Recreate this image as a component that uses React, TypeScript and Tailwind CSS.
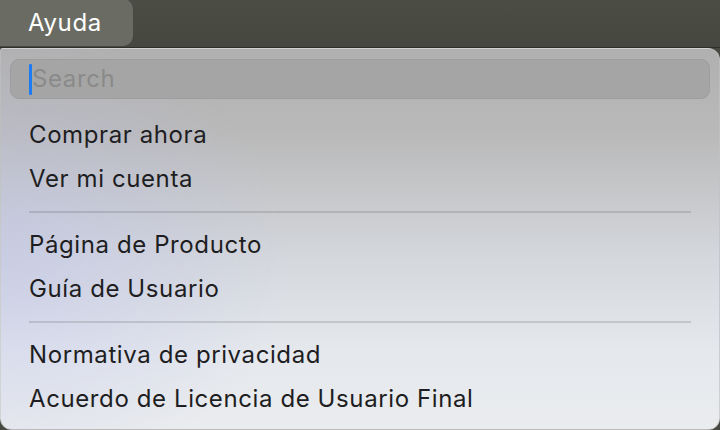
const groups = [
  ['Comprar ahora', 'Ver mi cuenta'],
  ['Página de Producto', 'Guía de Usuario'],
  ['Normativa de privacidad', 'Acuerdo de Licencia de Usuario Final'],
]

export default function App() {
  return (
    <div
      className="w-[720px] h-[430px] overflow-hidden bg-[#474941] flex flex-col tracking-[0.6px]"
      style={{ fontFamily: 'Inter, "Liberation Sans", sans-serif' }}
    >
      {/* Menu bar */}
      <div className="h-[48px] shrink-0 flex bg-[linear-gradient(to_bottom,#4b4d45,#464840)] border-b border-[#2e2f2b]">
        <div className="h-[47px] w-[133px] -mt-[1px] rounded-br-[10px] rounded-tr-[10px] bg-[#6a6c64] flex items-center pl-[28px]">
          <span className="text-white text-[24px] leading-none">Ayuda</span>
        </div>
      </div>

      {/* Dropdown panel */}
      <div className="flex-1 flex flex-col rounded-tr-[12px] rounded-b-[12px] rounded-tl-[3px] border border-[#c2c2c2]/60 bg-[radial-gradient(ellipse_40%_60%_at_0%_55%,rgba(190,195,235,0.5),transparent),linear-gradient(to_bottom,#b0b0b0_0%,#b9b9b9_22%,#d4d7dc_55%,#e5e8ed_80%,#eaecee_100%)]">
        {/* Search */}
        <div className="mx-[9px] mt-[10px] h-[40px] shrink-0 rounded-[9px] bg-[#a5a5a5] border border-[#9d9d9d] flex items-center pl-[18px]">
          <span className="w-[3px] h-[31px] bg-[#1c7cf4] rounded-[1px]" />
          <span className="text-[24px] leading-none text-[#8a8a8a]">Search</span>
        </div>

        <div className="flex flex-col pt-[14px]">
          {groups.map((g, gi) => (
            <div key={gi} className="flex flex-col">
              {gi > 0 && (
                <div className="h-[22px] flex items-center px-[28px]">
                  <div className="h-[2px] w-full bg-black/[0.12]" />
                </div>
              )}
              {g.map((label) => (
                <div
                  key={label}
                  className="h-[44px] flex items-center pl-[28px] text-[24px] leading-none text-[#1e1e22]"
                >
                  {label}
                </div>
              ))}
            </div>
          ))}
        </div>
      </div>
    </div>
  )
}
